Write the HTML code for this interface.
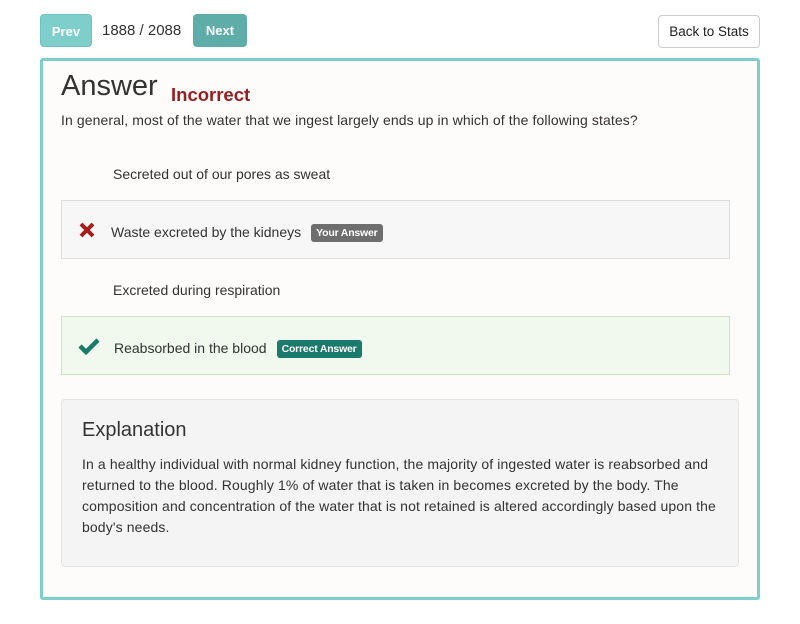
<!DOCTYPE html>
<html><head><meta charset="utf-8"><style>
body{margin:0;background:#fff;font-family:"Liberation Sans",sans-serif;color:#333;width:800px;height:624px;position:relative;overflow:hidden}
.a{position:absolute;white-space:nowrap}
.btn{position:absolute;border-radius:4px;font-weight:bold;color:#fff;font-size:13px;text-align:center;box-sizing:border-box}
.card{position:absolute;left:40px;top:58px;width:720px;height:542px;box-sizing:border-box;border:3px solid #7ecfcb;border-radius:3px;background:#fdfcfb}
.opt{font-size:14px;letter-spacing:0;color:#333}
.badge{display:inline-block;font-size:10.5px;font-weight:bold;color:#fff;padding:3px 5px;border-radius:3px;letter-spacing:-0.2px;vertical-align:1px;margin-left:10px}
</style></head><body>
<div class="btn" style="left:40px;top:14px;width:52px;height:33px;line-height:33px;background:#7ecfcb;border:1px solid #6fc2be">Prev</div>
<div class="a" style="left:102px;top:22px;font-size:15px;color:#333">1888 / 2088</div>
<div class="btn" style="left:193px;top:14px;width:54px;height:33px;line-height:33px;background:#5fada9">Next</div>
<div class="btn" style="left:658px;top:15px;width:102px;height:33px;line-height:31px;background:#fff;border:1px solid #ccc;color:#222;font-weight:normal;font-size:13.5px">Back to Stats</div>
<div class="card"></div>
<div class="a" style="left:61px;top:70px;font-size:29px;color:#333">Answer</div>
<div class="a" style="left:171px;top:84px;font-size:18.5px;font-weight:bold;color:#9b1c1c">Incorrect</div>
<div class="a" style="left:61px;top:112px;font-size:14px;letter-spacing:0.1px">In general, most of the water that we ingest largely ends up in which of the following states?</div>
<div class="a opt" style="left:113px;top:166px">Secreted out of our pores as sweat</div>
<div class="a" style="left:61px;top:200px;width:669px;height:59px;box-sizing:border-box;background:#f7f7f7;border:1px solid #ddd"></div>
<svg class="a" style="left:78px;top:221px" width="18" height="18" viewBox="0 0 18 18"><path d="M3 3L15 15M15 3L3 15" stroke="#a61c1c" stroke-width="4"/></svg>
<div class="a opt" style="left:111px;top:224px">Waste excreted by the kidneys<span class="badge" style="background:#6e6e6e">Your Answer</span></div>
<div class="a opt" style="left:113px;top:282px">Excreted during respiration</div>
<div class="a" style="left:61px;top:316px;width:669px;height:59px;box-sizing:border-box;background:#f1f9ef;border:1px solid #c9e7c1"></div>
<svg class="a" style="left:78px;top:337px" width="22" height="18" viewBox="0 0 22 18"><path d="M2 9L8 15L20 3" stroke="#1a7a6c" stroke-width="4.5" fill="none"/></svg>
<div class="a opt" style="left:114px;top:340px">Reabsorbed in the blood<span class="badge" style="background:#1a7a6c">Correct Answer</span></div>
<div class="a" style="left:61px;top:399px;width:678px;height:168px;box-sizing:border-box;background:#f4f4f4;border:1px solid #e3e3e3;border-radius:4px"></div>
<div class="a" style="left:82px;top:419px;font-size:20px;color:#333">Explanation</div>
<div class="a" style="left:82px;top:454px;font-size:14px;line-height:21px;letter-spacing:0.12px;color:#333">In a healthy individual with normal kidney function, the majority of ingested water is reabsorbed and<br>returned to the blood. Roughly 1% of water that is taken in becomes excreted by the body. The<br>composition and concentration of the water that is not retained is altered accordingly based upon the<br>body's needs.</div>
</body></html>
